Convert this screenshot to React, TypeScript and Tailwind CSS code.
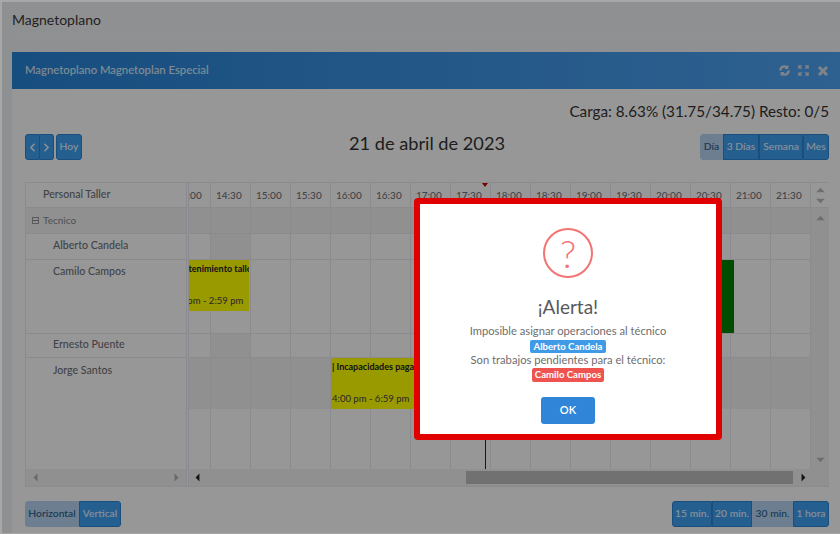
import React from "react";
import { ChevronLeft, ChevronRight } from "lucide-react";

const times = ["14:00","14:30","15:00","15:30","16:00","16:30","17:00","17:30","18:00","18:30","19:00","19:30","20:00","20:30","21:00","21:30"];

function Btn({ children, light, className = "" }: { children: React.ReactNode; light?: boolean; className?: string }) {
  return (
    <div className={`h-[26px] flex items-center justify-center text-[10.3px] font-medium border ${light ? "bg-[#b4d3ef] border-[#b4d3ef] text-[#2a5d8c]" : "bg-[#3f9ff0] border-[#2c82d0] text-[#e4f2fd]"} ${className}`}>
      {children}
    </div>
  );
}

function Cells({ h, shade = [], dark, border = true }: { h: string; shade?: number[]; dark?: boolean; border?: boolean }) {
  return (
    <div className={`flex w-[640px] ${h} ${border ? "border-b border-[#e8e8ee]" : ""}`}>
      {times.map((t, i) => (
        <div key={t} className={`w-10 shrink-0 border-r border-[#e8e8ee] ${dark ? "bg-[#f0f0f0]" : shade.includes(i) ? "bg-[#f0f0f0]" : ""}`} />
      ))}
    </div>
  );
}

function Ev({ title, time, className, inner = "pl-[1px]" }: { title: string; time: string; className: string; inner?: string }) {
  return (
    <div className={`absolute top-0 h-[51px] bg-[#ffff00] overflow-hidden whitespace-nowrap leading-none ${className}`}>
      <div className={`font-bold text-[9px] text-[#222] pt-[4px] ${inner}`}>{title}</div>
      <div className={`text-[9.5px] text-[#444] pt-[23px] ${inner}`}>{time}</div>
    </div>
  );
}

function Person({ name, h, pt }: { name: string; h: string; pt: string }) {
  return (
    <div className={`${h} ${pt} border-b border-[#e8e8ee] pl-[27px] text-[10.6px] leading-[16px] font-medium text-[#6e7077]`}>{name}</div>
  );
}

function Tri({ dir, className = "" }: { dir: "up" | "down" | "left" | "right"; className?: string }) {
  const p = { up: "0,6 5,1 10,6", down: "0,1 5,6 10,1", left: "7,0 2,5 7,10", right: "2,0 7,5 2,10" }[dir];
  return (
    <svg width={dir === "up" || dir === "down" ? 9 : 7} height={dir === "up" || dir === "down" ? 6 : 9} viewBox={dir === "up" || dir === "down" ? "0 0 10 7" : "0 0 9 10"} className={className} fill="currentColor">
      <polygon points={p} />
    </svg>
  );
}

export default function App() {
  return (
    <div className="relative w-[840px] h-[534px] overflow-hidden bg-[#eef0f3] font-['Lato','Noto_Sans',sans-serif] text-[#333]">
      <div className="h-[34px] ml-[12px] pt-[10px] text-[14px] leading-[20px] text-[#3a3a3a] border-b border-[#f4f4f6]">Magnetoplano</div>
      <div className="ml-[12px] mt-[18px] h-[482px] bg-[#fcfcfc]">
        <div className="h-[37px] flex items-center justify-between pl-[13px] pr-[11px] text-[11.3px] font-medium text-[#dbeaf6] bg-gradient-to-r from-[#2682d4] to-[#4ea2f0]">
          <span>Magnetoplano Magnetoplan Especial</span>
          <div className="flex items-center gap-[8px] text-[#d6dde4]">
            <svg width="11" height="11" viewBox="0 0 24 24" fill="none" stroke="currentColor" strokeWidth="5"><path d="M21 12a9 9 0 0 1-15.5 6.2M3 12a9 9 0 0 1 15.5-6.2" /><path d="M19 1v6h-6M5 23v-6h6" strokeWidth="3" /></svg>
            <svg width="11" height="11" viewBox="0 0 24 24" fill="none" stroke="currentColor" strokeWidth="3"><path d="M2 8V2h6M16 2h6v6M22 16v6h-6M8 22H2v-6M3 3l5 5M21 3l-5 5M21 21l-5-5M3 21l5-5" /></svg>
            <svg width="12" height="12" viewBox="0 0 24 24" fill="none" stroke="currentColor" strokeWidth="6"><path d="M4 4l16 16M20 4L4 20" /></svg>
          </div>
        </div>
        <div className="pl-[13px] pr-[11px]">
          <div className="h-[45px] pt-[12px] text-right text-[15.25px] leading-[20px] text-[#333] whitespace-nowrap">Carga: 8.63% (31.75/34.75) Resto: 0/5</div>
          <div className="relative h-[26px] flex justify-between">
            <div className="flex">
              <Btn className="w-[15px] rounded-l-[3px]"><ChevronLeft size={13} strokeWidth={3} /></Btn>
              <Btn className="w-[14px] rounded-r-[3px] border-l-0"><ChevronRight size={13} strokeWidth={3} /></Btn>
              <Btn className="w-[26px] ml-[2px] rounded-[3px]">Hoy</Btn>
            </div>
            <div className="absolute left-[324px] top-[-1px] text-[18.2px] leading-[20px] text-[#333] whitespace-nowrap">21 de abril de 2023</div>
            <div className="flex">
              <Btn light className="w-[23px] rounded-l-[3px]">Día</Btn>
              <Btn className="w-[36px]">3 Días</Btn>
              <Btn className="w-[44px]">Semana</Btn>
              <Btn className="w-[26px] rounded-r-[3px]">Mes</Btn>
            </div>
          </div>
          <div className="mt-[22px] flex h-[305px] border border-[#e8e8ee] border-r-0">
            <div className="w-[161px] shrink-0 border-r border-[#e8e8ee] flex flex-col">
              <div className="h-[25px] border-b border-[#e8e8ee] pl-[17px] flex items-center text-[10.6px] font-medium text-[#6e7077]">Personal Taller</div>
              <div className="h-[26px] border-b border-[#e8e8ee] bg-[#f0f0f0] pl-[6px] flex items-center gap-[4px] text-[10px] text-[#85878d]">
                <span className="w-[7px] h-[7px] border border-[#999] flex items-center justify-center"><span className="w-[5px] h-px bg-[#888]" /></span>
                Tecnico
              </div>
              <Person name="Alberto Candela" h="h-[26px]" pt="pt-[3px]" />
              <Person name="Camilo Campos" h="h-[74px]" pt="pt-[3px]" />
              <Person name="Ernesto Puente" h="h-[24px]" pt="pt-[2px]" />
              <div className="flex-1 pl-[27px] pt-[4px] text-[10.6px] leading-[16px] font-medium text-[#6e7077]">Jorge Santos</div>
              <div className="h-[17px] bg-[#f0f0f0] flex items-center justify-between px-[6px] text-[#b0b0b0]"><Tri dir="left" /><Tri dir="right" /></div>
            </div>
            <div className="w-[1px] shrink-0" />
            <div className="w-[623px] shrink-0 border-l border-[#e8e8ee] flex flex-col overflow-hidden">
              <div className="flex-1 overflow-hidden relative">
                <div className="ml-[-18px] w-[640px] flex flex-col h-full">
                  <div className="relative flex h-[25px] border-b border-[#e8e8ee] text-[10px] font-medium text-[#70727a]">
                    {times.map((t) => (
                      <div key={t} className="w-10 shrink-0 border-r border-[#e8e8ee] pl-[5px] flex items-center">{t}</div>
                    ))}
                    <div className="absolute left-[311px] top-0 w-0 h-0 border-x-[3px] border-x-transparent border-t-[4px] border-t-[#cc0000]" />
                  </div>
                  <Cells h="h-[26px]" dark />
                  <Cells h="h-[26px]" shade={[1]} />
                  <div className="relative">
                    <Cells h="h-[74px]" />
                    <Ev className="left-0 w-[78px]" inner="-ml-[5px]" title="| Mantenimiento taller" time="1:59 pm - 2:59 pm" />
                    <div className="absolute top-0 left-[551px] w-[12px] h-[73px] bg-[#008000]" />
                  </div>
                  <Cells h="h-[24px]" shade={[1]} />
                  <div className="relative">
                    <Cells h="h-[51px]" border={false} shade={[0,1,2,3,4,5,6,7,8,9,10,11,12,13,14,15]} />
                    <Ev className="left-[160px] w-[120px]" title="| Incapacidades pagadas" time="4:00 pm - 6:59 pm" />
                  </div>
                  <Cells h="flex-1" border={false} />
                </div>
                <div className="absolute left-[296px] top-[25px] bottom-0 w-px bg-[#800000]" />
              </div>
              <div className="h-[17px] bg-[#f0f0f0] flex items-center">
                <Tri dir="left" className="ml-[5px] text-[#222]" />
                <div className="ml-[265px] w-[327px] h-[13px] bg-[#bcbcbc]" />
                <Tri dir="right" className="ml-[7px] text-[#222]" />
              </div>
            </div>
            <div className="flex-1 flex flex-col bg-[#eeeeee]">
              <div className="h-[25px] bg-[#fcfcfc] border-b border-[#e8e8ee] flex flex-col items-center justify-center gap-[5px] text-[#b8b8b8]"><Tri dir="up" /><Tri dir="down" /></div>
              <div className="flex-1 flex flex-col items-center justify-between pt-[7px] pb-[6px] text-[#b8b8b8] bg-[#f0f0f0]"><Tri dir="up" /><Tri dir="down" /></div>
              <div className="h-[17px] bg-[#f0f0f0]" />
            </div>
          </div>
          <div className="mt-[14px] flex justify-between">
            <div className="flex">
              <Btn light className="w-[54px] rounded-l-[3px]">Horizontal</Btn>
              <Btn className="w-[42px] rounded-r-[3px]">Vertical</Btn>
            </div>
            <div className="flex">
              <Btn className="w-[40px] rounded-l-[3px]">15 min.</Btn>
              <Btn className="w-[40px]">20 min.</Btn>
              <Btn light className="w-[41px]">30 min.</Btn>
              <Btn className="w-[36px] rounded-r-[3px]">1 hora</Btn>
            </div>
          </div>
        </div>
      </div>

      <div className="absolute inset-0 bg-black/40 border-t-2 border-l-2 border-b border-[#a8a8a8]" />

      <div className="absolute left-[414px] top-[198px] w-[308px] h-[242px] bg-white border-[6px] border-[#e00000] rounded-[4px] flex flex-col items-center">
        <div className="mt-[24px] w-[50px] h-[50px] rounded-full border-2 border-[#f27474] flex items-center justify-center text-[#f27474] text-[38px] leading-none font-light">?</div>
        <div className="mt-[15px] text-[19px] leading-[28px] text-[#595959]">¡Alerta!</div>
        <div className="mt-[3px] flex flex-col items-center text-[11.2px] leading-[14.5px] text-[#6e6e6e]">
          <span>Imposible asignar operaciones al técnico</span>
          <span className="px-[3px] h-[13px] rounded-[2px] bg-[#3f9ae8] text-white text-[9.6px] font-bold leading-[13px] mt-[1px]">Alberto Candela</span>
          <span>Son trabajos pendientes para el técnico:</span>
          <span className="px-[3px] h-[14px] rounded-[2px] bg-[#ef5350] text-white text-[9.6px] font-bold leading-[14px] mt-[1px]">Camilo Campos</span>
        </div>
        <div className="mt-[15px] w-[54px] h-[27px] rounded-[3px] bg-[#3085d9] text-white text-[11px] font-semibold flex items-center justify-center">OK</div>
      </div>
    </div>
  );
}
